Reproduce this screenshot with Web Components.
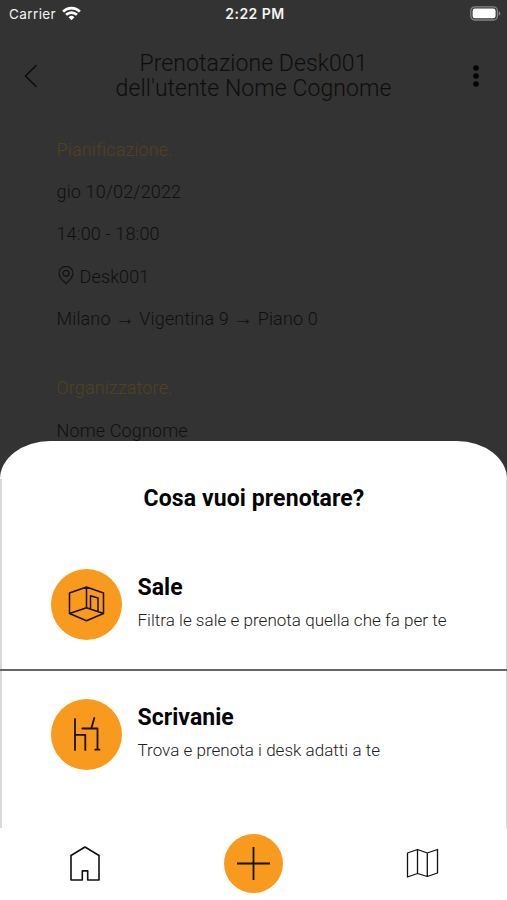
<!DOCTYPE html>
<html lang="it">
<head>
<meta charset="utf-8">
<title>Prenotazione</title>
<style>
html, body { margin: 0; padding: 0; background: #333; }
body { font-family: Roboto, "Liberation Sans", sans-serif; }
</style>
</head>
<body>
<booking-screen></booking-screen>
<script>
const define = (name, html) => {
  const t = document.createElement('template');
  t.innerHTML = html;
  customElements.define(name, class extends HTMLElement {
    constructor() {
      super();
      this.attachShadow({ mode: 'open' }).append(t.content.cloneNode(true));
    }
  });
};

define('status-bar', `
<style>
:host { display: grid; grid-template-columns: 1fr auto 1fr; align-items: center; height: 27px; padding: 0 6px 0 9px; box-sizing: border-box; color: #f4f4f4; font-family: Inter, Roboto, sans-serif; font-size: 13.5px; }
.left { display: flex; align-items: center; gap: 6px; letter-spacing: .4px; }
.time { font-weight: 600; font-size: 14px; letter-spacing: .45px; }
.right { justify-self: end; }
svg { display: block; }
</style>
<div class="left"><span>Carrier</span>
<svg width="19" height="15" viewBox="0 0 19 15" fill="none" stroke="#fff" stroke-width="2.7"><path d="M1.1 5.6a12 12 0 0 1 16.8 0M4.1 8.8a7.8 7.8 0 0 1 10.8 0"/><path d="M9.5 14.2 6.6 11.2a4.2 4.2 0 0 1 5.8 0Z" fill="#fff" stroke="none"/></svg></div>
<span class="time">2:22 PM</span>
<svg class="right" width="31" height="15" viewBox="0 0 31 15"><rect x=".8" y=".8" width="26.6" height="13.2" rx="4" fill="none" stroke="#858585" stroke-width="1.3"/><rect x="2.6" y="2.6" width="23" height="9.6" rx="2.3" fill="#fff"/><path d="M28.7 5.2c2.2.8 2.2 3.7 0 4.5z" fill="#858585"/></svg>`);

define('page-header', `
<style>
:host { display: grid; grid-template-columns: 62px 1fr 62px; align-items: center; height: 98px; color: #0d0d0d; }
h1 { margin: 0; text-align: center; font-weight: 300; font-size: 23px; line-height: 25px; letter-spacing: .08px; }
svg { display: block; justify-self: center; }
</style>
<svg width="14" height="24" viewBox="0 0 14 24" fill="none" stroke="#0d0d0d" stroke-width="1.5"><path d="M12.5 1 1.5 12l11 11"/></svg>
<h1><slot></slot></h1>
<svg width="6" height="22" viewBox="0 0 6 22" fill="#050505"><circle cx="3" cy="3" r="2.8"/><circle cx="3" cy="11" r="2.8"/><circle cx="3" cy="19" r="2.8"/></svg>`);

define('detail-row', `
<style>
:host { display: flex; align-items: center; gap: 5px; height: 42.35px; font-weight: 300; font-size: 18px; letter-spacing: .14px; color: #0f0f0f; white-space: nowrap; }
:host([heading]) { color: #54411f; }
</style><slot name="icon"></slot><span><slot></slot></span>`);

define('option-card', `
<style>
:host { display: flex; align-items: center; gap: 15.5px; padding-left: 49px; height: 128px; box-sizing: border-box; }
.badge { flex: none; display: grid; place-items: center; width: 71px; height: 71px; border-radius: 50%; background: #f79a1d; }
h2 { margin: 0; font-size: 23px; line-height: 28px; font-weight: 700; color: #050505; letter-spacing: .05px; }
p { margin: 4px 0 1px; font-size: 17px; line-height: 28px; font-weight: 300; color: #202020; white-space: nowrap; letter-spacing: .03px; }
</style>
<div class="badge"><slot name="icon"></slot></div>
<div><h2><slot name="title"></slot></h2><p><slot></slot></p></div>`);

define('booking-sheet', `
<style>
:host { position: absolute; left: 0; right: 0; top: 441px; height: 387px; box-sizing: border-box; background: linear-gradient(#d8d8d8, #d8d8d8) 0 38px / 2px 100% no-repeat, linear-gradient(#d8d8d8, #d8d8d8) 100% 38px / 1px 100% no-repeat, #fff; padding: 1px 1px 0 2px; border-radius: 50px 50px 0 0 / 38px 38px 0 0; }
h2 { margin: 0; text-align: center; font-size: 23px; line-height: 28px; padding: 43px 0 27px; color: #050505; letter-spacing: .1px; }
hr { margin: 0 -1px 0 -2px; border: 0; height: 2px; background: #666; position: relative; top: 1px; }
svg { display: block; }
</style>
<h2>Cosa vuoi prenotare?</h2>
<option-card>
<svg slot="icon" width="37" height="37" viewBox="0 0 37 37" fill="none" stroke="#1a1003" stroke-width="1.5" stroke-linejoin="round"><path d="M1.5 7 18.5 1 35.5 7V27.5L18.5 34.8 1.5 27.5ZM18.5 1V21.8L1.5 27.5M18.5 21.8 35.5 27.5M22.5 23.1V9.8L30 12V25.6"/></svg>
<span slot="title">Sale</span>Filtra le sale e prenota quella che fa per te</option-card>
<hr>
<option-card>
<svg slot="icon" width="37" height="37" viewBox="0 0 37 37" fill="none" stroke="#1a1003" stroke-width="1.8" stroke-linejoin="round" stroke-linecap="round"><path d="M7 3V34M7 18.8H17.3V34M14.3 12.5H29.5V33.5M27.3 33.7H31.5M23.3 12.5 26.3 2"/></svg>
<span slot="title">Scrivanie</span>Trova e prenota i desk adatti a te</option-card>`);

define('tab-bar', `
<style>
:host { position: absolute; left: 0; right: 0; bottom: 0; height: 72px; padding-bottom: 2px; box-sizing: border-box; display: grid; grid-template-columns: repeat(3, 1fr); place-items: center; background: #fff; }
.add { display: grid; place-items: center; width: 59px; height: 59px; border-radius: 50%; background: #f79a1d; }
svg { display: block; fill: none; stroke: #111; stroke-linejoin: round; }
</style>
<svg width="30" height="36" viewBox="0 0 30 36" stroke-width="1.6"><path d="M1 35V10.5L15 2 29 10.5V35H17.7V25.9H12.3V35Z"/></svg>
<div class="add"><svg width="33" height="33" viewBox="0 0 33 33" stroke-width="1.8"><path d="M16.5 0V33M0 16.5H33"/></svg></div>
<svg width="33" height="30" viewBox="0 0 33 30" stroke-width="1.3"><path d="M1.5 5 11.5 1.5 21.3 5 31.5 1.5V25L21.3 28.5 11.5 25.5 1.5 29ZM11.5 1.5V25.5M21.3 5V28.5"/></svg>`);

define('booking-screen', `
<style>
:host { display: block; position: relative; width: 507px; height: 900px; overflow: hidden; background: #333; }
section { padding: 3px 56.5px 0; }
section + section { padding-top: 27px; }
.arrow { font-family: "Liberation Sans", sans-serif; font-size: 19.5px; line-height: 1; }
</style>
<status-bar></status-bar>
<page-header>Prenotazione Desk001<br>dell'utente Nome Cognome</page-header>
<section>
<detail-row heading>Pianificazione.</detail-row>
<detail-row>gio 10/02/2022</detail-row>
<detail-row>14:00 - 18:00</detail-row>
<detail-row><svg slot="icon" width="18" height="20" viewBox="0 0 18 20" fill="none" stroke="#121212" stroke-width="1.2"><path d="M9 17.8C6.5 15.5 2 11 2 7.2a7 6.8 0 0 1 14 0C16 11 11.5 15.5 9 17.8Z"/><circle cx="9" cy="7.3" r="3"/></svg>Desk001</detail-row>
<detail-row>Milano <span class="arrow">→</span> Vigentina 9 <span class="arrow">→</span> Piano 0</detail-row>
</section>
<section>
<detail-row heading>Organizzatore.</detail-row>
<detail-row>Nome Cognome</detail-row>
</section>
<booking-sheet></booking-sheet>
<tab-bar></tab-bar>`);
</script>
</body>
</html>
